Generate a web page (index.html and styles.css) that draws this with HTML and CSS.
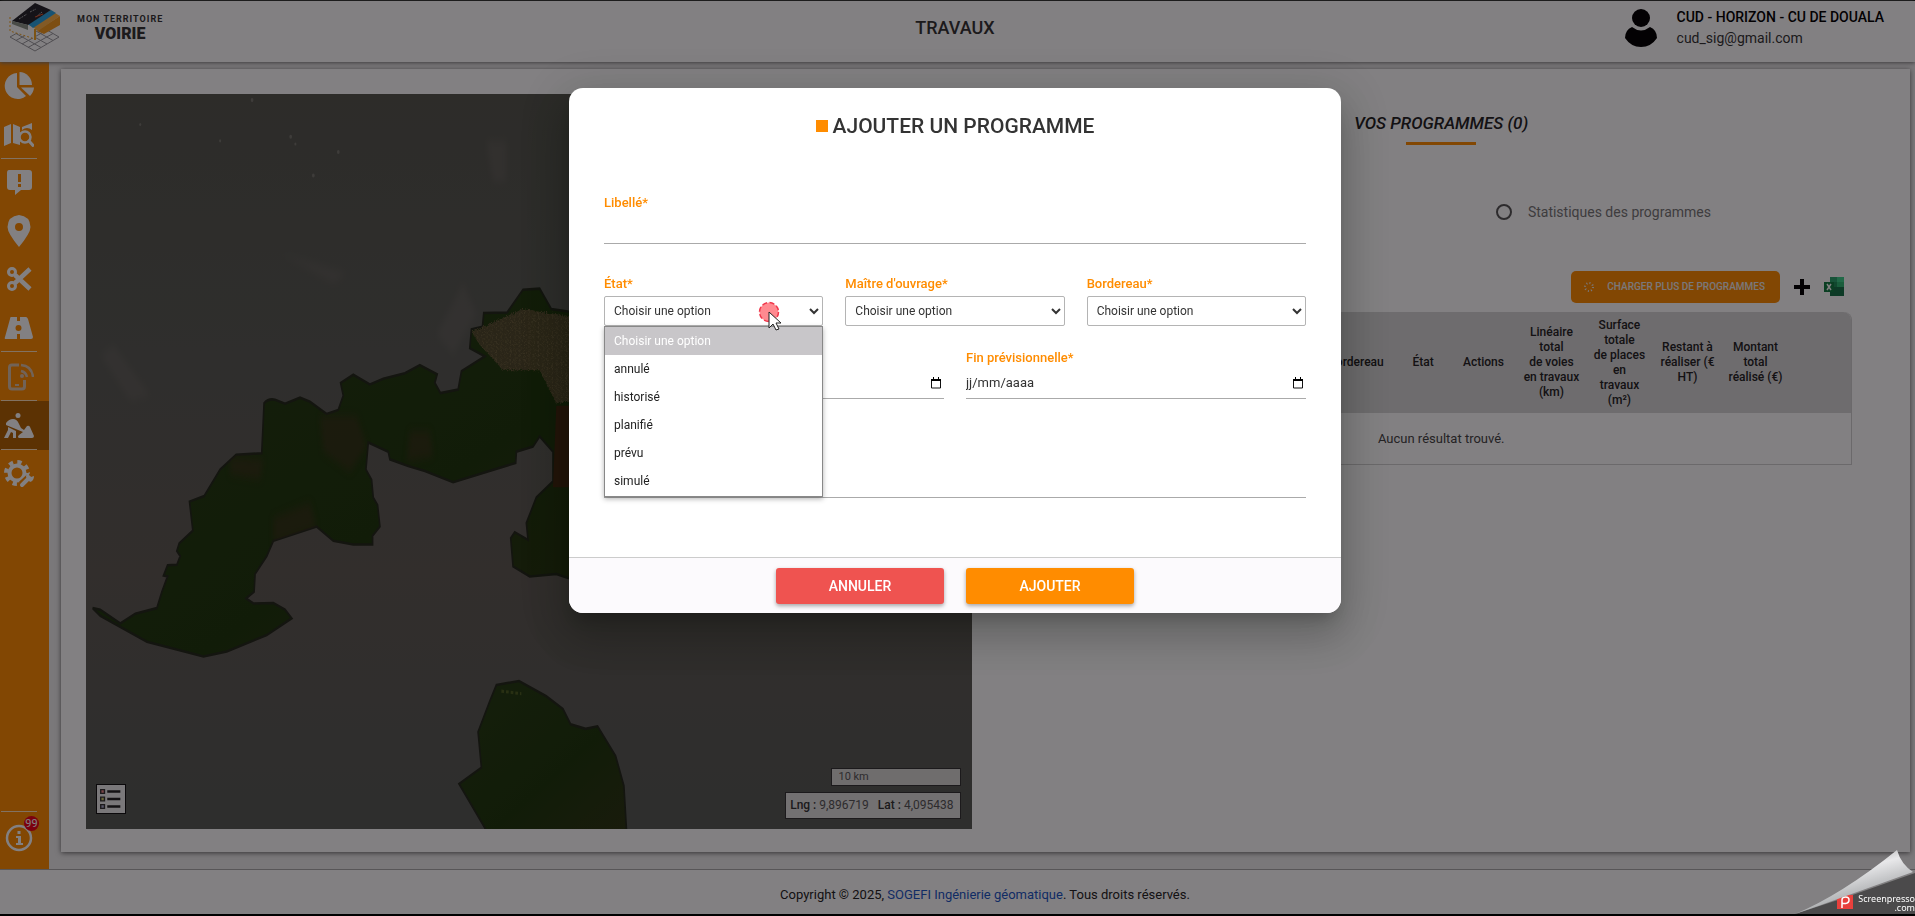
FILE: index.html
```html
<!DOCTYPE html>
<html lang="fr">
<head>
<meta charset="utf-8">
<title>Mon territoire Voirie - Travaux</title>
<link rel="stylesheet" href="styles.css">
</head>
<body>
<div class="app">
  <header class="topbar">
    <a class="brand" href="#">
      <svg class="brand-mark" viewBox="0 0 52 50" aria-hidden="true">
        <g fill="none" stroke="#9a9a9e" stroke-width="1"><path d="M1 35 26 49 50 35 26 21ZM7 38.500 32 24.500M13 42 38 28M19 45.500 44 31.500M7 31.500 32 45.500M13 28 38 42M19 24.500 44 38.500"/></g>
        <path d="M1 15v14l25 8V26z" fill="#fff"/>
        <path d="M1 15v14l25 8" fill="none" stroke="#f5a623" stroke-dasharray="2 2"/>
        <path d="m35 24 16-10v9L35 32l-7-3z" fill="#f59a1c"/>
        <path d="m24 25 22-14 5 3-22 15z" fill="#ffb347"/>
        <path d="m19 22 23-14 5 3-23 15z" fill="#2aa5e0"/>
        <path d="M3 19 26 1l16 7-23 15z" fill="#24242a"/>
        <path d="M3 19v3l16 6v-5z" fill="#8c9488"/>
        <path d="m10 17 8-5m3-2 6-3m0 8 6-5" stroke="#aaa" stroke-dasharray="2 1" fill="none"/>
        <path d="m26 15 8-3" stroke="#e8572a"/>
        <path d="M26 27v11" stroke="#f5a623" stroke-width="2"/>
      </svg>
      <span class="brand-text"><span class="brand-top">MON TERRITOIRE</span><strong class="brand-name">VOIRIE</strong></span>
    </a>
    <h1 class="page-title">TRAVAUX</h1>
    <div class="user">
      <svg class="user-icon" viewBox="0 0 32 38" aria-hidden="true"><circle cx="16" cy="9" r="9"/><path d="M7 18q9 7 18 0 7 3 7 11-6 9-16 9T0 29q0-8 7-11z"/></svg>
      <div class="user-text"><strong>CUD - HORIZON - CU DE DOUALA</strong><span>cud_sig@gmail.com</span></div>
    </div>
  </header>

  <div class="body">
    <nav class="sidebar" aria-label="Navigation">
      <a class="nav" href="#" aria-label="Statistiques"><svg viewBox="0 0 30 28"><path d="M13 1v14l9 9A13 13 0 1 1 13 1z"/><path d="M15.500 0A13 13 0 0 1 28 13H15.500z"/><path d="M17 15.500h13q-.5 5-4 8.500z"/></svg></a>
      <a class="nav sep" href="#" aria-label="Carte"><svg viewBox="0 0 30 28"><path d="M0 6 7 3v19l-7 3zM9 3l7 3v18l-7-2zM18 6l10-4v7q-5-4-10 0z"/><circle cx="21" cy="16" r="5.500" fill="none" stroke="currentColor" stroke-width="2.500"/><path d="m25 20 4 4.500" stroke="currentColor" stroke-width="3" stroke-linecap="round"/></svg></a>
      <a class="nav" href="#" aria-label="Signalements"><svg viewBox="0 0 30 28"><path fill-rule="evenodd" d="M5 1h20q3 0 3 3v14q0 3-3 3h-8l-6 5v-5H6q-3 0-3-3V4q0-3 2-3zm9 4v8h3V5zm0 10v3h3v-3z"/></svg></a>
      <a class="nav" href="#" aria-label="Points"><svg class="tall" viewBox="0 0 24 32"><path fill-rule="evenodd" d="M12 0q11 1 11.500 12 0 6-11.500 20Q.5 18 .5 12 1 1 12 0zm0 8a4 4 0 1 0 0 8 4 4 0 0 0 0-8z"/></svg></a>
      <a class="nav" href="#" aria-label="Découpe"><svg viewBox="0 0 30 28"><g fill="none" stroke="currentColor"><circle cx="8" cy="7" r="3.500" stroke-width="3"/><circle cx="8" cy="21" r="3.500" stroke-width="3"/><path d="M11 18 26 4M11 10l15 14" stroke-width="4.500"/></g></svg></a>
      <a class="nav sep" href="#" aria-label="Routes"><svg viewBox="0 0 30 28"><path fill-rule="evenodd" d="M7 3h6v4h3V3h6q1 0 2 2l5 18q0 2-2 2H16v-5h-3v5H2q-2 0-1-2L6 5q0-2 1-2zm7.500 8a3 3 0 1 0 0 6 3 3 0 0 0 0-6z"/></svg></a>
      <a class="nav sep dim" href="#" aria-label="Mobile"><svg viewBox="0 0 30 28"><g fill="none" stroke="currentColor" stroke-width="3"><path d="M15 2H8Q5.500 2 5.500 4.500v19Q5.500 26 8 26h10q2.500 0 2.500-2.500V17"/><path d="M17 2q11 1 12 12M17 8q5 1 6 6" stroke-width="2.500"/><path d="M11 22h4" stroke-width="2"/></g><circle cx="18" cy="13" r="2"/></svg></a>
      <a class="nav sep active" href="#" aria-label="Travaux" aria-current="page"><svg viewBox="0 0 30 28"><circle cx="14" cy="3.500" r="2.500"/><path d="M2 11q3-4 7-4t6 5l2 4 3 2 3-4q2-1 3 1l4 9q0 2-2 2H15q-2-1 0-3l4-3L2 13z"/><path d="m4 15 8 4v7H9v-5l-2-1-3 6H0l4-8z"/></svg></a>
      <a class="nav" href="#" aria-label="Paramètres"><svg viewBox="0 0 30 28"><circle cx="13" cy="13" r="7.500" fill="none" stroke="currentColor" stroke-width="4"/><circle cx="13" cy="13" r="11" fill="none" stroke="currentColor" stroke-width="4" stroke-dasharray="4.320"/><path d="m18 25 10-9" stroke="#ff8c00" stroke-width="9"/><path d="m18 25 7-7" stroke="currentColor" stroke-width="4" stroke-linecap="round"/><path d="M26 12q-4 1-4 5l4 5q4-1 4-6l-3 1-2-2z"/></svg></a>
      <a class="nav info" href="#" aria-label="Informations"><svg viewBox="0 0 30 28"><circle cx="15" cy="14" r="12" fill="none" stroke="currentColor" stroke-width="2.500"/><path d="M13.500 7h3v3h-3zM12 12h5v7h2v2h-7v-2h2v-5h-2z"/></svg><span class="badge">99</span></a>
    </nav>

    <main class="main">
      <section class="card">
        <div class="map">
          <svg class="map-canvas" viewBox="0 0 888 736" preserveAspectRatio="xMinYMin slice" aria-hidden="true">
            <defs>
              <linearGradient id="sea" x1="0" y1="0" x2="0" y2="1"><stop offset="0" stop-color="#54564d"/><stop offset=".35" stop-color="#585b54"/><stop offset=".65" stop-color="#5e5a53"/><stop offset="1" stop-color="#565a55"/></linearGradient>
              <linearGradient id="land" x1="0" y1="0" x2="1" y2="1"><stop offset="0" stop-color="#253c12"/><stop offset=".6" stop-color="#1d370b"/><stop offset="1" stop-color="#2c3512"/></linearGradient>
              <filter id="soft" x="-50%" y="-50%" width="200%" height="200%"><feGaussianBlur stdDeviation="8"/></filter>
              <filter id="rough"><feTurbulence type="fractalNoise" baseFrequency=".3" numOctaves="2" result="n"/><feDisplacementMap in="SourceGraphic" in2="n" scale="12"/></filter>
              <clipPath id="shore"><path d="M37 1017 60 1020 120 1047 165 1028 230 1017 245 985 262 955 250 953 262 933 290 932 300 915 290 905 297 890 338 865 328 808 372 797 420 745 468 716 545 713 552 615Q565 605 585 608L615 616 660 604 690 612 740 636 775 628 790 600 782 575 820 559 870 578 910 567 975 556 1020 540 1072 558 1065 575 1082 595 1135 588 1145 552 1215 523 1170 507 1175 470 1208 465 1212 438 1282 437 1330 392 1380 390 1415 430 1465 435 1600 440V958H1465L1430 950 1350 955 1300 935 1293 880 1305 868 1345 883 1340 850 1370 800 1420 768V710L1380 680 1360 700 1310 710 1308 732 1120 770 1035 748 985 738 930 725 925 710 865 692 858 745 875 765 880 800 893 815 900 857 878 875V892H820L760 885 710 857 580 885 560 915 525 950 522 985 498 998 520 1008 580 1007 615 1020 635 1037 560 1070 440 1102 370 1112 200 1083 60 1032Z"/></clipPath>
              <pattern id="roofs" width="14" height="9" patternUnits="userSpaceOnUse"><path d="M1 1h4v1H1zM8 4h4v1H8zM3 6h2v2H3z" fill="#85764e"/></pattern>
            </defs>
            <rect width="888" height="736" fill="url(#sea)"/>
            <g transform="scale(.3333 .5102) translate(-17 -8)">
              <g fill="#74706a" filter="url(#soft)" opacity=".3"><path d="M60 520 100 500 210 600 150 610zM600 320 800 360 760 380zM1070 480 1150 380 1190 440 1120 520zM1220 100h60v80h-40z"/></g>
              <g fill="#85857c" opacity=".7"><circle cx="180" cy="68" r="3"/><circle cx="632" cy="92" r="4"/><circle cx="646" cy="106" r="3"/><circle cx="775" cy="122" r="4"/><circle cx="420" cy="100" r="3"/><circle cx="700" cy="168" r="4"/><circle cx="516" cy="20" r="4"/></g>
              <path d="M37 1017 60 1020 120 1047 165 1028 230 1017 245 985 262 955 250 953 262 933 290 932 300 915 290 905 297 890 338 865 328 808 372 797 420 745 468 716 545 713 552 615Q565 605 585 608L615 616 660 604 690 612 740 636 775 628 790 600 782 575 820 559 870 578 910 567 975 556 1020 540 1072 558 1065 575 1082 595 1135 588 1145 552 1215 523 1170 507 1175 470 1208 465 1212 438 1282 437 1330 392 1380 390 1415 430 1465 435 1600 440V958H1465L1430 950 1350 955 1300 935 1293 880 1305 868 1345 883 1340 850 1370 800 1420 768V710L1380 680 1360 700 1310 710 1308 732 1120 770 1035 748 985 738 930 725 925 710 865 692 858 745 875 765 880 800 893 815 900 857 878 875V892H820L760 885 710 857 580 885 560 915 525 950 522 985 498 998 520 1008 580 1007 615 1020 635 1037 560 1070 440 1102 370 1112 200 1083 60 1032Z" fill="url(#land)" stroke="#22281a" stroke-width="5"/>
              <g clip-path="url(#shore)">
                <path d="M720 640h110l30 60-50 50-80-40zM580 840l110-30 20 50-130 30zM450 720l100 5-10 40-90-10zM990 670h60l10 50-80 10z" fill="#44321a" opacity=".5" filter="url(#soft)"/>
                <path d="M1430 620h100v160h-110z" fill="#42280f"/>
                <path d="M1175 475 1330 430 1480 445V610L1430 615 1380 550 1270 550 1200 500z" fill="#4f4a2a" filter="url(#rough)"/>
                <path d="M1175 475 1330 430 1480 445V610L1430 615 1380 550 1270 550 1200 500z" fill="url(#roofs)" filter="url(#rough)"/>
              </g>
              <path d="M1250 1168 1318 1160 1400 1190 1450 1215 1473 1245 1518 1254 1554 1249 1608 1307 1633 1366 1641 1455H1220L1215 1448 1138 1362 1205 1330 1195 1260 1230 1200z" fill="url(#land)" stroke="#22281a" stroke-width="5"/>
              <path d="M1265 1180l60 5" stroke="#4d5f20" stroke-width="6" stroke-dasharray="8 6"/>
            </g>
          </svg>
          <button class="legend" type="button" aria-label="Légende"><svg viewBox="0 0 30 30"><path d="M11 7h14M11 15h14M11 23h14" stroke="#222" stroke-width="2.500"/><g stroke="#333" stroke-width="1.500"><path d="M4 5h4v4H4z" fill="#e88"/><path d="M4 13h4v4H4z" fill="#cc6"/><path d="M4 21h4v4H4z" fill="#aac"/></g></svg></button>
          <div class="map-info">
            <div class="scale">10 km</div>
            <div class="coords"><span><b>Lng :</b> 9,896719</span><span><b>Lat :</b> 4,095438</span></div>
          </div>
        </div>

        <div class="panel">
          <h2 class="panel-title">VOS PROGRAMMES (0)</h2>
          <div class="views">
            <label class="view"><input type="radio" name="view" checked>Liste des programmes</label>
            <label class="view"><input type="radio" name="view">Statistiques des programmes</label>
          </div>
          <div class="tools">
            <button class="load" type="button"><svg viewBox="0 0 12 12" aria-hidden="true"><circle cx="6" cy="6" r="4" fill="none" stroke="currentColor" stroke-width="2" stroke-dasharray="1 2.140"/></svg>CHARGER PLUS DE PROGRAMMES</button>
            <button class="tool" type="button" aria-label="Ajouter"><svg viewBox="0 0 20 20"><path d="M10 2v16M2 10h16" stroke="#000" stroke-width="4"/></svg></button>
            <button class="tool" type="button" aria-label="Exporter vers Excel"><svg viewBox="0 0 20 20"><path d="M6 0h7v10H6z" fill="#2ba56c"/><path d="M13 0h7v5h-7z" fill="#3fd08a"/><path d="M6 5h7v5H6z" fill="#1f8f58"/><path d="M13 5h7v5h-7z" fill="#2fb873"/><path d="M6 10h14v9H6z" fill="#157347"/><path d="M0 5h10v10H0z" fill="#107c41"/><path d="m3 7 4 6M7 7l-4 6" stroke="#fff" stroke-width="1.500"/></svg></button>
          </div>
          <table class="grid">
            <colgroup><col class="c-name"><col class="c-bord"><col class="c-state"><col class="c-num"><col class="c-num"><col class="c-num"><col class="c-num"><col class="c-num"><col class="c-end"></colgroup>
            <thead><tr><th>Programme</th><th>Bordereau</th><th>État</th><th>Actions</th><th>Linéaire<br>total<br>de voies<br>en travaux<br>(km)</th><th>Surface<br>totale<br>de places<br>en<br>travaux<br>(m²)</th><th>Restant à<br>réaliser (€<br>HT)</th><th>Montant<br>total<br>réalisé (€)</th><th></th></tr></thead>
            <tbody><tr><td colspan="9">Aucun résultat trouvé.</td></tr></tbody>
          </table>
        </div>
      </section>
    </main>
  </div>

  <footer class="footer"><p>Copyright © 2025, <a href="#">SOGEFI Ingénierie géomatique</a>. Tous droits réservés.</p></footer>
</div>

<div class="overlay">
  <form class="modal" role="dialog" aria-labelledby="modal-title">
    <div class="modal-body">
      <h2 class="modal-title" id="modal-title">AJOUTER UN PROGRAMME</h2>
      <div class="field"><label for="libelle">Libellé*</label><input class="line" id="libelle" type="text"></div>
      <div class="row thirds">
        <div class="field select-field">
          <label for="etat">État*</label>
          <select id="etat"><option>Choisir une option</option></select>
          <ul class="options" role="listbox" aria-label="État">
            <li class="on" role="option" aria-selected="true">Choisir une option</li>
            <li role="option">annulé</li><li role="option">historisé</li><li role="option">planifié</li><li role="option">prévu</li><li role="option">simulé</li>
          </ul>
          <svg class="pointer" viewBox="0 0 26 30" aria-hidden="true"><circle cx="11" cy="11" r="9.500" fill="#ff8a90" stroke="#f0384c" stroke-width="1.500" stroke-dasharray="5 2.500"/><path d="M11 11v16l4-4 3 6 3-1-3-6h5z" fill="#fff" stroke="#222"/></svg>
        </div>
        <div class="field"><label for="moa">Maître d'ouvrage*</label><select id="moa"><option>Choisir une option</option></select></div>
        <div class="field"><label for="bord">Bordereau*</label><select id="bord"><option>Choisir une option</option></select></div>
      </div>
      <div class="row halves">
        <div class="field"><div class="date-box"><input aria-label="Début prévisionnel" type="text"><svg viewBox="0 0 12 12" aria-hidden="true"><path d="M1.500 2.500h9v8.500h-9z" fill="none" stroke="#111"/><path d="M1 2h10v2H1zM3 0h1v2H3zM8 0h1v2H8z"/></svg></div></div>
        <div class="field"><label for="fin">Fin prévisionnelle*</label><div class="date-box"><input id="fin" type="text" placeholder="jj/mm/aaaa"><svg viewBox="0 0 12 12" aria-hidden="true"><path d="M1.500 2.500h9v8.500h-9z" fill="none" stroke="#111"/><path d="M1 2h10v2H1zM3 0h1v2H3zM8 0h1v2H8z"/></svg></div></div>
      </div>
      <div class="field note"><textarea class="line" aria-label="Description"></textarea></div>
    </div>
    <div class="modal-foot"><button class="btn cancel" type="button">ANNULER</button><button class="btn add" type="submit">AJOUTER</button></div>
  </form>
</div>

<div class="peel">
  <svg viewBox="0 0 124 66" aria-hidden="true">
    <defs><linearGradient id="curl" x1="0" y1="0" x2=".5" y2="1"><stop offset="0" stop-color="#777"/><stop offset=".45" stop-color="#e8e8ea"/><stop offset="1" stop-color="#8d9092"/></linearGradient></defs>
    <path d="M4 65 50 50 124 24V65z" fill="#4b4a4b"/>
    <path d="M46 46h16v14H46z" fill="#e8403c"/>
    <path d="M51 59v-8q0-3 3.500-3t3.500 3-3.500 3.500T51 53" fill="none" stroke="#fff" stroke-width="1.500"/>
    <path d="M4 65Q50 46 106 1q4 14 16 22Q80 38 30 56z" fill="url(#curl)"/>
  </svg>
  <p class="peel-text">Screenpresso<br>.com</p>
</div>
</body>
</html>
```

FILE: styles.css
```css
* { box-sizing: border-box; }
body { margin: 0; background: #000; color: #222; font: 14px/20px Roboto, "Liberation Sans", sans-serif; }
h1, h2, p, ul { margin: 0; padding: 0; }
button, input, select, textarea { font: inherit; color: inherit; }
a { color: inherit; text-decoration: none; }

.app { display: flex; flex-direction: column; min-height: 100vh; padding: 1px 0 2px; }
.topbar { display: grid; grid-template-columns: 1fr auto 1fr; align-items: center; height: 61px; padding: 0 5px 15px 0; background: #fff; box-shadow: 0 1px 4px #777; position: relative; z-index: 1; }
.brand { display: flex; align-items: flex-start; gap: 16px; height: 46px; padding-left: 9px; color: #333; }
.brand-mark { width: 52px; height: 50px; flex: none; }
.brand-text { display: flex; flex-direction: column; align-items: center; padding-top: 11px; }
.brand-top { font-size: 9px; line-height: 12px; font-weight: 700; letter-spacing: 1px; }
.brand-name { font-size: 16px; line-height: 18px; font-weight: 900; }
.page-title { font-size: 18px; line-height: 24px; font-weight: 500; color: #333; padding-top: 5px; }
.user { display: flex; gap: 20px; justify-content: flex-end; align-items: center; padding-right: 26px; color: #000; }
.user-icon { width: 32px; height: 38px; margin-top: 6px; }
.user-text { display: flex; flex-direction: column; font-size: 14px; line-height: 21px; padding-top: 6px; }
.user-text strong { font-weight: 500; }
.user-text span { color: #333; }

.body { display: flex; flex: 1; background: #eee; }
.sidebar { display: flex; flex-direction: column; width: 49px; flex: none; background: #ff8c00; color: #fff; }
.nav { display: flex; align-items: center; height: 48px; padding-left: 4px; position: relative; }
.nav svg { width: 30px; height: 28px; fill: currentColor; }
.nav .tall { width: 30px; height: 32px; }
.nav.dim { color: #ddc4aa; }
.nav.active { background: #b36200; }
.nav.sep { height: 49px; }
.nav.sep::after { content: ""; position: absolute; left: 1px; width: 36px; bottom: 0; border-bottom: 1px solid #ffe2be; }
.nav.info { margin-top: auto; height: 58px; padding-bottom: 4px; }
.nav.info::before { content: ""; position: absolute; left: 1px; width: 36px; top: 0; border-top: 1px solid #ffe2be; }
.badge { position: absolute; left: 24px; top: 5px; width: 15px; height: 15px; border-radius: 50%; background: #f00016; font-size: 11px; line-height: 15px; text-align: center; }

.main { flex: 1; display: flex; padding: 7px 5px 17px 12px; }
.card { flex: 1; display: flex; background: #fff; box-shadow: 0 1px 5px #666; padding: 25px 0 23px 25px; }
.map { flex: 0 0 48.6%; position: relative; overflow: hidden; background: #5a5a54; }
.map-canvas { position: absolute; width: 100%; height: 100%; }
.legend { position: absolute; left: 10px; bottom: 15px; width: 30px; height: 30px; padding: 0; border: 1px solid #111; background: #eee; }
.legend svg { display: block; width: 28px; height: 28px; }
.map-info { position: absolute; right: 11px; bottom: 10px; display: flex; flex-direction: column; align-items: flex-end; gap: 6px; font-size: 12px; color: #555; }
.scale { width: 130px; padding: 0 6px; line-height: 16px; font-size: 11px; background: #d8d8d4; border: 1px solid #333; }
.coords { display: flex; gap: 9px; padding: 0 7px 0 4px; line-height: 25px; background: #e0e0de; border: 1px solid #333; }
.coords b { font-weight: 500; color: #333; }

.panel { flex: 1; min-width: 0; padding: 16px 58px 0; }
.panel-title { display: flex; flex-direction: column; align-items: center; gap: 6px; font-size: 17px; line-height: 26px; font-weight: 500; font-style: italic; }
.panel-title::after { content: ""; width: 70px; height: 3px; background: #ff8c00; }
.views { display: flex; justify-content: space-between; padding: 57px 141px 0 126px; font-size: 14px; color: #777; }
.view { display: flex; align-items: center; gap: 16px; }
.view input { appearance: none; width: 16px; height: 16px; margin: 0; border: 2px solid #555; border-radius: 50%; }
.tools { display: flex; justify-content: flex-end; align-items: center; gap: 12px; padding: 49px 8px 9px 0; }
.load { display: flex; align-items: center; gap: 12px; height: 32px; padding: 0 15px 0 12px; border: 0; border-radius: 5px; background: #ff8c00; color: #eee; font-size: 10px; font-weight: 500; }
.load svg { width: 12px; height: 12px; }
.tool { padding: 0; border: 0; background: none; }
.tool svg { display: block; width: 20px; height: 20px; }
.grid { width: 100%; table-layout: fixed; border-collapse: separate; border-spacing: 0; border: 1px solid #d0d0d0; border-top: 0; border-radius: 8px 8px 0 0; text-align: center; }
.grid th { height: 101px; padding: 5px 0; background: #d6d6d6; font-size: 12px; line-height: 15px; font-weight: 500; }
.grid th:first-child { border-top-left-radius: 8px; }
.grid th:last-child { border-top-right-radius: 8px; }
.grid td { height: 51px; padding: 0; font-size: 13px; color: #444; }
.c-name { width: 34.6%; }
.c-bord { width: 10%; }
.c-state { width: 6.4%; }
.c-num { width: 8.3%; }
.c-end { width: 7.5%; }

.footer { height: 45px; padding: 6px 5px 0 60px; display: flex; align-items: center; justify-content: center; background: #fff; border-top: 1px solid #aaa; font-size: 14px; }
.footer p { font-size: 13px; }
.footer a { color: #1a56c4; }

.overlay { position: fixed; inset: 1px 0 2px; z-index: 5; display: flex; justify-content: center; align-items: flex-start; padding: 87px 5px 0 0; background: rgba(6, 2, 6, .5); }
.modal { width: 772px; max-width: 90%; border-radius: 14px; background: #fff; box-shadow: 0 11px 15px -7px rgba(0, 0, 0, .2), 0 24px 38px 3px rgba(0, 0, 0, .14), 0 9px 46px 8px rgba(0, 0, 0, .12); }
.modal-body { padding: 21px 35px 59px; }
.modal-title { display: flex; align-items: center; justify-content: center; gap: 5px; height: 34px; font-size: 21px; font-weight: 500; color: #333; }
.modal-title::before { content: ""; width: 12px; height: 12px; background: #ff8c00; }
.field { display: flex; flex-direction: column; min-width: 0; }
.field label { font-size: 13px; line-height: 20px; font-weight: 500; color: #ff8c00; }
.modal-title + .field { padding-top: 50px; }
.line { width: 100%; height: 31px; padding: 0; border: 0; border-bottom: 1px solid #aaa; background: none; resize: none; }
.row { display: grid; gap: 22px; align-items: end; }
.thirds { grid-template-columns: repeat(3, 1fr); padding-top: 30px; }
.thirds label { height: 22px; }
.select-field { position: relative; }
.field select { height: 30px; width: 100%; padding: 0 0 0 5px; border: 1px solid #b4b4b4; border-radius: 2px; background: #fff; font-size: 12px; color: #333; }
.options { position: absolute; z-index: 2; top: 52px; left: 0; right: 0; padding-bottom: 1px; list-style: none; border: 1px solid #888; background: #fff; box-shadow: 0 2px 5px rgba(0, 0, 0, .3); font-size: 12px; line-height: 28px; color: #222; }
.options li { padding: 0 9px; }
.options .on { background: #c8c6c9; color: #fff; }
.pointer { position: absolute; z-index: 3; right: 39px; top: 27px; width: 26px; height: 30px; }
.halves { grid-template-columns: repeat(2, 1fr); padding-top: 22px; }
.date-box { display: flex; align-items: center; height: 31px; border-bottom: 1px solid #aaa; }
.date-box input { flex: 1; min-width: 0; border: 0; padding: 0; font-size: 13px; outline: 0; }
.date-box input::placeholder { color: #333; opacity: 1; }
.date-box svg { width: 12px; height: 12px; margin-right: 2px; }
.note { padding-top: 44px; }
.note .line { height: 55px; }
.modal-foot { display: flex; justify-content: center; gap: 22px; padding: 10px 0 9px; border-top: 1px solid #ccc; border-radius: 0 0 14px 14px; background: #fcfafd; }
.btn { width: 168px; height: 36px; border: 0; border-radius: 3px; color: #fff; font-weight: 500; box-shadow: 0 2px 4px rgba(0, 0, 0, .35); }
.cancel { background: #ef5350; }
.add { background: #ff8c00; }

.peel { position: fixed; right: 0; bottom: 1px; z-index: 6; width: 124px; height: 66px; overflow: hidden; }
.peel svg { display: block; width: 124px; height: 66px; }
.peel-text { position: absolute; right: 0; bottom: 3px; color: #fff; font: 9px/9px "Noto Sans", sans-serif; text-align: right; }
```
